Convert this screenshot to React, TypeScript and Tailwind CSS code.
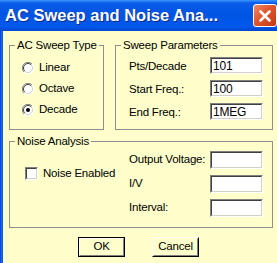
import React from "react";

function Radio({ checked }: { checked?: boolean }) {
  return (
    <svg width="12" height="12" viewBox="0 0 12 12" className="shrink-0">
      <circle cx="6" cy="6" r="5.5" fill="#ffffff" />
      <path d="M10 2 A5.5 5.5 0 0 0 2 10" fill="none" stroke="#808080" strokeWidth="1" />
      <path d="M9.2 2.8 A4.5 4.5 0 0 0 2.8 9.2" fill="none" stroke="#404040" strokeWidth="1" />
      <path d="M2 10 A5.5 5.5 0 0 0 10 2" fill="none" stroke="#ffffff" strokeWidth="1" />
      <path d="M2.8 9.2 A4.5 4.5 0 0 0 9.2 2.8" fill="none" stroke="#d4d0c8" strokeWidth="1" />
      {checked && <circle cx="6" cy="6" r="2" fill="#000000" />}
    </svg>
  );
}

function Field({ value, h }: { value?: string; h: string }) {
  return (
    <div className={"w-[53px] shrink-0 border border-t-[#808080] border-l-[#808080] border-b-white border-r-white " + h}>
      <div className="h-full border border-t-[#404040] border-l-[#404040] border-b-[#d4d0c8] border-r-[#d4d0c8] bg-white flex items-center pl-[1px] text-[12px] leading-none text-black">
        {value}
      </div>
    </div>
  );
}

export default function App() {
  return (
    <div className="w-[277px] h-[263px] overflow-hidden flex flex-col bg-[#ffffcc] font-['Liberation_Sans',Arial,sans-serif] text-black">
      <div className="h-[31px] shrink-0 flex items-center justify-between pl-[5px] bg-[linear-gradient(to_bottom,#3d95ff_0%,#0a5ce8_10%,#0054e3_45%,#0058ec_85%,#0046cf_100%)]">
        <span className="font-bold text-[16.5px] leading-none text-white [text-shadow:1px_1px_0_#0b2a8a] whitespace-nowrap">
          AC Sweep and Noise Ana...
        </span>
        <div className="w-[24px] h-[23px] rounded-[3px] border border-white bg-[linear-gradient(135deg,#f08a68_0%,#e0552d_45%,#c23a12_100%)] flex items-center justify-center">
          <svg width="14" height="14" viewBox="0 0 14 14">
            <path d="M2.5 2.5 L11.5 11.5 M11.5 2.5 L2.5 11.5" stroke="#ffffff" strokeWidth="2.6" strokeLinecap="round" />
          </svg>
        </div>
      </div>
      <div className="flex-1 flex flex-row">
        <div className="w-[3px] shrink-0 bg-[linear-gradient(to_right,#0831d9,#166aee,#0055ea)]" />
        <div className="flex-1 flex flex-col pt-[7px] text-[11.5px] tracking-[-0.2px]">
          <div className="flex flex-row">
            <fieldset className="ml-[6px] w-[95px] h-[92px] border border-[#8e8e8e] min-w-0">
              <legend className="ml-[5px] px-[2px] leading-[14px] whitespace-nowrap">AC Sweep Type</legend>
              <div className="pt-[5px] flex flex-col">
                {[
                  ["Linear", false],
                  ["Octave", false],
                  ["Decade", true],
                ].map(([l, c]) => (
                  <div key={l as string} className="h-[21px] flex items-center pl-[12px] gap-[5px]">
                    <Radio checked={c as boolean} />
                    <span className="leading-none">{l as string}</span>
                  </div>
                ))}
              </div>
            </fieldset>
            <fieldset className="ml-[11px] w-[158px] h-[92px] border border-[#8e8e8e] min-w-0">
              <legend className="ml-[5px] px-[2px] leading-[14px] whitespace-nowrap">Sweep Parameters</legend>
              <div className="pt-[5px] pl-[13px] flex flex-col gap-[6px]">
                {[
                  ["Pts/Decade", "101"],
                  ["Start Freq.:", "100"],
                  ["End Freq.:", "1MEG"],
                ].map(([l, v]) => (
                  <div key={l} className="flex items-center">
                    <span className="w-[81px] leading-none pt-[2px] whitespace-nowrap">{l}</span>
                    <Field value={v} h="h-[17px]" />
                  </div>
                ))}
              </div>
            </fieldset>
          </div>
          <fieldset className="mt-[4px] ml-[6px] w-[264px] h-[94px] border border-[#8e8e8e] min-w-0">
            <legend className="ml-[5px] px-[2px] leading-[14px] whitespace-nowrap">Noise Analysis</legend>
            <div className="pt-[3px] flex flex-row">
              <div className="w-[119px] shrink-0 pl-[15px] pt-[16px]">
                <div className="flex items-center gap-[5px]">
                  <div className="w-[13px] h-[13px] shrink-0 border border-t-[#808080] border-l-[#808080] border-b-white border-r-white">
                    <div className="h-full border border-t-[#404040] border-l-[#404040] border-b-[#d4d0c8] border-r-[#d4d0c8] bg-white" />
                  </div>
                  <span className="leading-none whitespace-nowrap">Noise Enabled</span>
                </div>
              </div>
              <div className="flex flex-col gap-[6px]">
                {["Output Voltage:", "I/V", "Interval:"].map((l) => (
                  <div key={l} className="flex items-center">
                    <span className="w-[81px] leading-none whitespace-nowrap">{l}</span>
                    <Field h="h-[18px]" />
                  </div>
                ))}
              </div>
            </div>
          </fieldset>
          <div className="mt-[9px] pl-[75px] flex flex-row gap-[27px]">
            <div className="w-[47px] h-[20px] border border-black">
              <div className="h-full border border-t-white border-l-white border-b-[#808080] border-r-[#808080] flex items-center justify-center leading-none">
                OK
              </div>
            </div>
            <div className="w-[47px] h-[20px] border border-t-white border-l-white border-b-black border-r-black">
              <div className="h-full border border-t-[#ffffcc] border-l-[#ffffcc] border-b-[#808080] border-r-[#808080] flex items-center justify-center leading-none">
                Cancel
              </div>
            </div>
          </div>
        </div>
      </div>
    </div>
  );
}
